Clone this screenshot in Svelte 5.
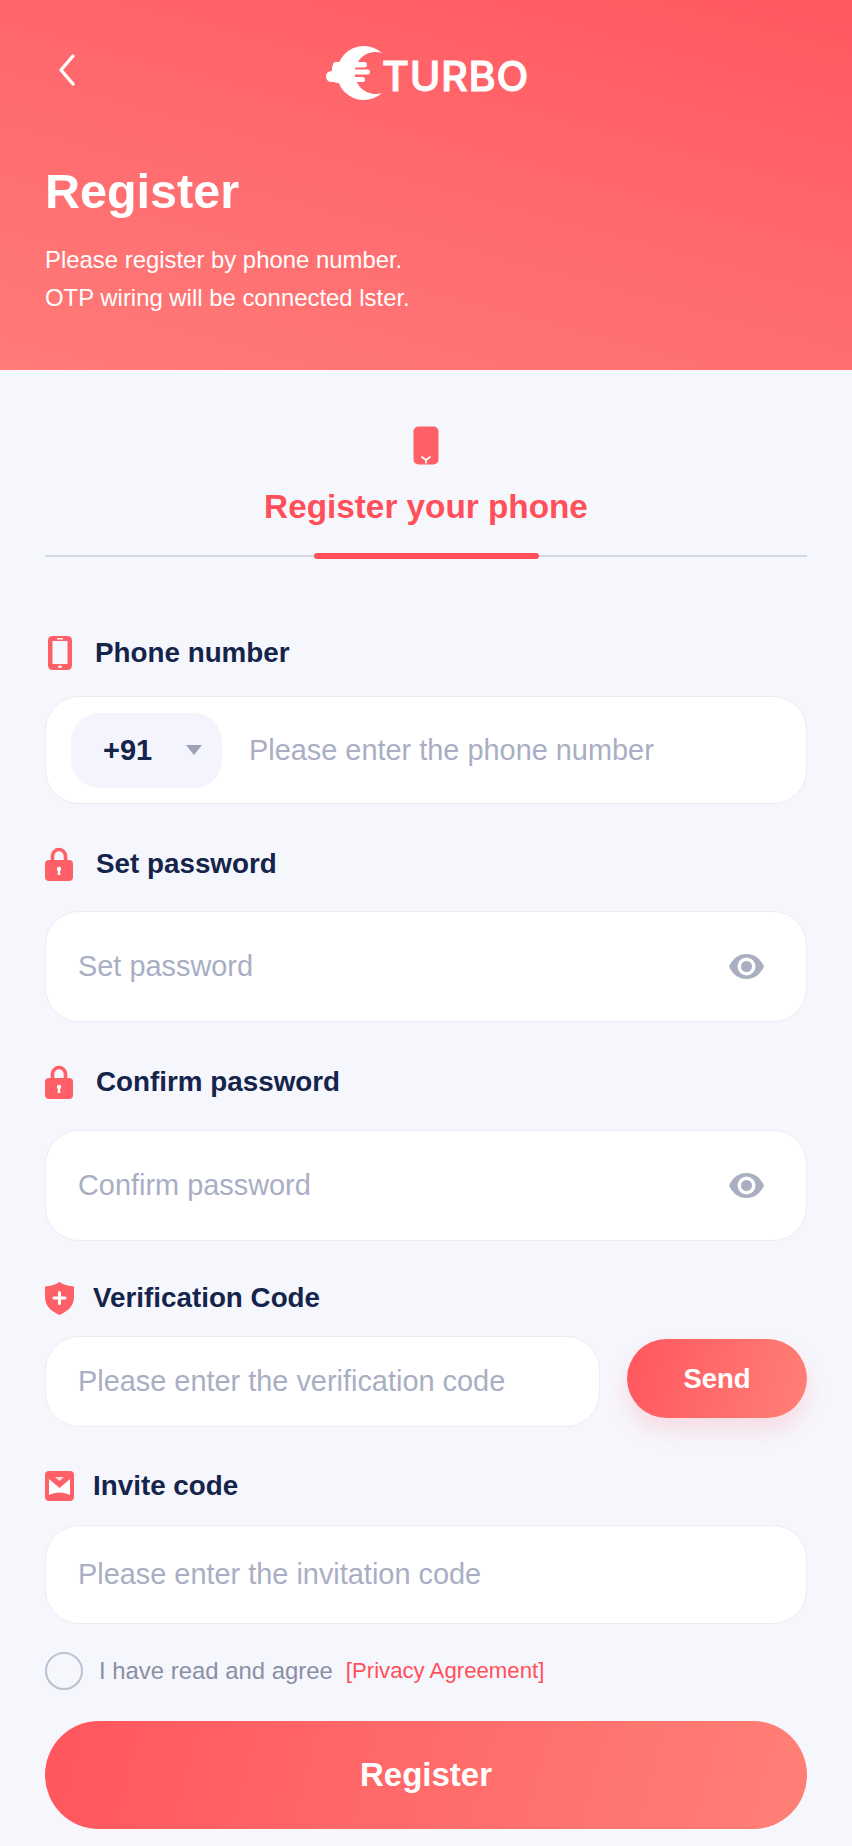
<script>
	// eye icon is shared by both password rows
	const eyePath = 'M1 13.500C5 5 11 1 18.500 1S32 5 36 13.500C32 22 26 26 18.500 26S5 22 1 13.500Z';
</script>

<div class="page">
	<header class="hero">
		<div class="topbar">
			<button class="back" aria-label="Back">
				<svg width="20" height="34" viewBox="0 0 20 34" fill="none">
					<path d="M17 3 5 17l12 14" stroke="#fff" stroke-width="3.400" stroke-linecap="round" stroke-linejoin="round" />
				</svg>
			</button>
			<div class="logo">
				<svg width="58" height="58" viewBox="0 0 58 58" fill="#fff">
					<path d="M57 7A27 27 0 1 0 57 47A21 21 0 1 1 57 7Z" />
					<rect x="8" y="16" width="34" height="5.500" rx="2.700" />
					<rect x="10" y="23.500" width="35" height="5" rx="2.500" />
					<rect x="10" y="31" width="30" height="5" rx="2.500" />
					<rect x="1" y="25" width="22" height="11" rx="5.500" />
					<rect x="7" y="17" width="22" height="20" rx="5" />
				</svg>
				<span class="wordmark">TURBO</span>
			</div>
		</div>
		<h1>Register</h1>
		<p>Please register by phone number.<br />OTP wiring will be connected lster.</p>
	</header>

	<main class="content">
		<div class="tab">
			<svg width="26" height="39" viewBox="0 0 26 39">
				<rect x="0.500" y="0.500" width="25" height="38" rx="5" fill="#ff6068" />
				<path d="M9 31l4 3 4-3M13 34v3" stroke="#fff" stroke-width="1.600" fill="none" stroke-linecap="round" />
			</svg>
			<div class="tab-title">Register your phone</div>
		</div>

		<div class="label first">
			<svg class="ico" width="24" height="34" viewBox="0 0 24 34">
				<rect width="24" height="34" rx="4.500" fill="#ff5f66" />
				<rect x="4.500" y="5" width="15" height="23" fill="#f6f7fd" />
				<rect x="9" y="2" width="6" height="1.400" rx="0.700" fill="#fff" />
				<ellipse cx="12" cy="30.800" rx="2" ry="1.300" fill="#fff" />
			</svg>
			<span>Phone number</span>
		</div>
		<div class="field phone">
			<div class="code">
				<span>+91</span>
				<i class="caret"></i>
			</div>
			<input placeholder="Please enter the phone number" />
		</div>

		<div class="label tight">
			<svg class="ico" width="28" height="34" viewBox="0 0 28 34">
				<path d="M7.500 15V9a6.500 6.500 0 0 1 13 0v6" fill="none" stroke="#ff5f66" stroke-width="3.600" />
				<rect y="13" width="28" height="21" rx="4" fill="#ff5f66" />
				<circle cx="14" cy="22" r="2.200" fill="#fff" />
				<path d="M13.200 22h1.600l.6 6h-2.800Z" fill="#fff" />
			</svg>
			<span>Set password</span>
		</div>
		<div class="field pass">
			<input placeholder="Set password" />
			<svg class="eye" width="37" height="27" viewBox="0 0 37 27">
				<path d={eyePath} fill="#a9aec1" />
				<circle cx="18.500" cy="13.500" r="9" fill="#fff" />
				<circle cx="18.500" cy="13.500" r="5.500" fill="#a9aec1" />
			</svg>
		</div>

		<div class="label">
			<svg class="ico" width="28" height="34" viewBox="0 0 28 34">
				<path d="M7.500 15V9a6.500 6.500 0 0 1 13 0v6" fill="none" stroke="#ff5f66" stroke-width="3.600" />
				<rect y="13" width="28" height="21" rx="4" fill="#ff5f66" />
				<circle cx="14" cy="22" r="2.200" fill="#fff" />
				<path d="M13.200 22h1.600l.6 6h-2.800Z" fill="#fff" />
			</svg>
			<span>Confirm password</span>
		</div>
		<div class="field pass">
			<input placeholder="Confirm password" />
			<svg class="eye" width="37" height="27" viewBox="0 0 37 27">
				<path d={eyePath} fill="#a9aec1" />
				<circle cx="18.500" cy="13.500" r="9" fill="#fff" />
				<circle cx="18.500" cy="13.500" r="5.500" fill="#a9aec1" />
			</svg>
		</div>

		<div class="label narrow verify">
			<svg class="ico" width="29" height="33" viewBox="0 0 29 33">
				<path d="M14.500 0C19 3 24 4 29 4.500V15c0 9-6 14-14.500 18C6 29 0 24 0 15V4.500C5 4 10 3 14.500 0Z" fill="#ff5f66" />
				<path d="M14.500 10.500v11M9 16h11" stroke="#fff" stroke-width="3" stroke-linecap="round" />
			</svg>
			<span>Verification Code</span>
		</div>
		<div class="code-row">
			<div class="field verify-field">
				<input placeholder="Please enter the verification code" />
			</div>
			<button class="send">Send</button>
		</div>

		<div class="label narrow invite">
			<svg class="ico" width="29" height="30" viewBox="0 0 29 30">
				<rect width="29" height="30" rx="4" fill="#ff5f66" />
				<path d="M4 8l10.500 9L25 8v16c-3-1.500-7-2.500-10.500-2.500S7 22.500 4 24Z" fill="#fff" />
				<path d="M10 6h9l-4.500 4Z" fill="#fff" opacity="0.800" />
			</svg>
			<span>Invite code</span>
		</div>
		<div class="field invite-field">
			<input placeholder="Please enter the invitation code" />
		</div>

		<div class="agree">
			<i class="radio"></i>
			<span class="agree-text">I have read and agree</span>
			<span class="agree-link">[Privacy Agreement]</span>
		</div>

		<button class="submit">Register</button>
	</main>
</div>

<style>
	:global(body) {
		background: #f6f7fd;
		font-family: 'Liberation Sans', Arial, sans-serif;
	}
	.page {
		width: 852px;
		height: 1846px;
		overflow: hidden;
		background: #f6f7fd;
	}
	.hero {
		height: 370px;
		box-sizing: border-box;
		padding: 46px 45px 0;
		color: #fff;
		background: linear-gradient(195deg, #ff585f 0%, #ff6a6e 50%, #ff7b78 100%);
	}
	.topbar {
		position: relative;
		height: 58px;
		display: flex;
		justify-content: center;
	}
	.back {
		position: absolute;
		left: 11px;
		top: 7px;
		padding: 0;
		border: 0;
		background: none;
	}
	.logo {
		display: flex;
		align-items: center;
		margin-left: 2px;
	}
	.wordmark {
		font-family: Inter, sans-serif;
		font-weight: 500;
		font-size: 41.500px;
		letter-spacing: 0.6px;
		line-height: 58px;
		margin-left: -1px;
		margin-top: 1px;
		-webkit-text-stroke: 1px #fff;
	}
	h1 {
		margin: 57px 0 0;
		font-size: 48.500px;
		line-height: 60px;
		font-weight: 700;
	}
	.hero p {
		margin: 20px 0 0;
		font-size: 23.900px;
		line-height: 38px;
	}
	.content {
		padding: 0 45px;
	}
	.tab {
		box-sizing: border-box;
		height: 187px;
		padding-top: 56px;
		display: flex;
		flex-direction: column;
		align-items: center;
		position: relative;
		border-bottom: 2px solid #d5d7e3;
	}
	.tab::after {
		content: '';
		position: absolute;
		left: 269px;
		bottom: -4px;
		width: 225px;
		height: 6px;
		border-radius: 3px;
		background: #ff4f5a;
	}
	.tab-title {
		margin-top: 22px;
		font-size: 33.300px;
		line-height: 40px;
		font-weight: 700;
		color: #ff4f5a;
	}
	.label {
		height: 40px;
		margin: 40px 0 28px;
		display: flex;
		align-items: center;
		gap: 23px;
		font-size: 27.800px;
		font-weight: 700;
		color: #14244a;
	}
	.label.first {
		margin: 76px 0 23px;
	}
	.label.first .ico {
		margin-left: 3px;
	}
	.label.tight {
		margin-bottom: 27px;
	}
	.label.narrow {
		gap: 19px;
	}
	.label.verify {
		margin: 37px 0 18px;
	}
	.label.invite {
		margin: 39px 0 19px;
	}
	.field {
		box-sizing: border-box;
		display: flex;
		align-items: center;
		background: #fff;
		border: 1.500px solid #ebecf4;
		border-radius: 34px;
		padding: 0 32px;
	}
	.field input {
		flex: 1;
		min-width: 0;
		padding: 0;
		border: 0;
		outline: 0;
		background: none;
		font: 28.900px 'Liberation Sans', Arial, sans-serif;
	}
	.field input::placeholder {
		color: #a9aec4;
		opacity: 1;
	}
	.phone {
		height: 108px;
		padding: 0 0 0 25px;
		gap: 27px;
	}
	.code {
		width: 151px;
		height: 75px;
		box-sizing: border-box;
		padding-left: 32px;
		display: flex;
		align-items: center;
		gap: 34px;
		background: #f4f5fc;
		border-radius: 28px;
		font-size: 29px;
		font-weight: 700;
		color: #14244a;
	}
	.caret {
		width: 0;
		height: 0;
		border-left: 8px solid transparent;
		border-right: 8px solid transparent;
		border-top: 10px solid #9ea2b8;
	}
	.pass {
		height: 111px;
		padding-right: 41px;
	}
	.eye {
		flex: none;
	}
	.code-row {
		display: flex;
		gap: 27px;
		align-items: flex-start;
	}
	.verify-field {
		flex: 1;
		height: 91px;
	}
	.send {
		flex: none;
		width: 180px;
		height: 79px;
		margin-top: 3px;
		border: 0;
		border-radius: 40px;
		background: linear-gradient(105deg, #ff565d, #ff8077);
		box-shadow: 0 12px 24px rgba(255, 90, 100, 0.18);
		color: #fff;
		font: 700 27.500px 'Liberation Sans', Arial, sans-serif;
	}
	.invite-field {
		height: 99px;
	}
	.agree {
		margin-top: 28px;
		height: 38px;
		display: flex;
		align-items: center;
	}
	.radio {
		box-sizing: border-box;
		width: 38px;
		height: 38px;
		border: 2.500px solid #bcc0d2;
		border-radius: 50%;
	}
	.agree-text {
		margin-left: 16px;
		font-size: 23.900px;
		color: #8b8fa6;
	}
	.agree-link {
		margin-left: 13px;
		font-size: 22.200px;
		color: #ff4f5a;
	}
	.submit {
		display: block;
		margin-top: 31px;
		width: 100%;
		height: 108px;
		border: 0;
		border-radius: 54px;
		background: linear-gradient(105deg, #ff565d, #ff8077);
		color: #fff;
		font: 700 33px 'Liberation Sans', Arial, sans-serif;
	}
</style>
